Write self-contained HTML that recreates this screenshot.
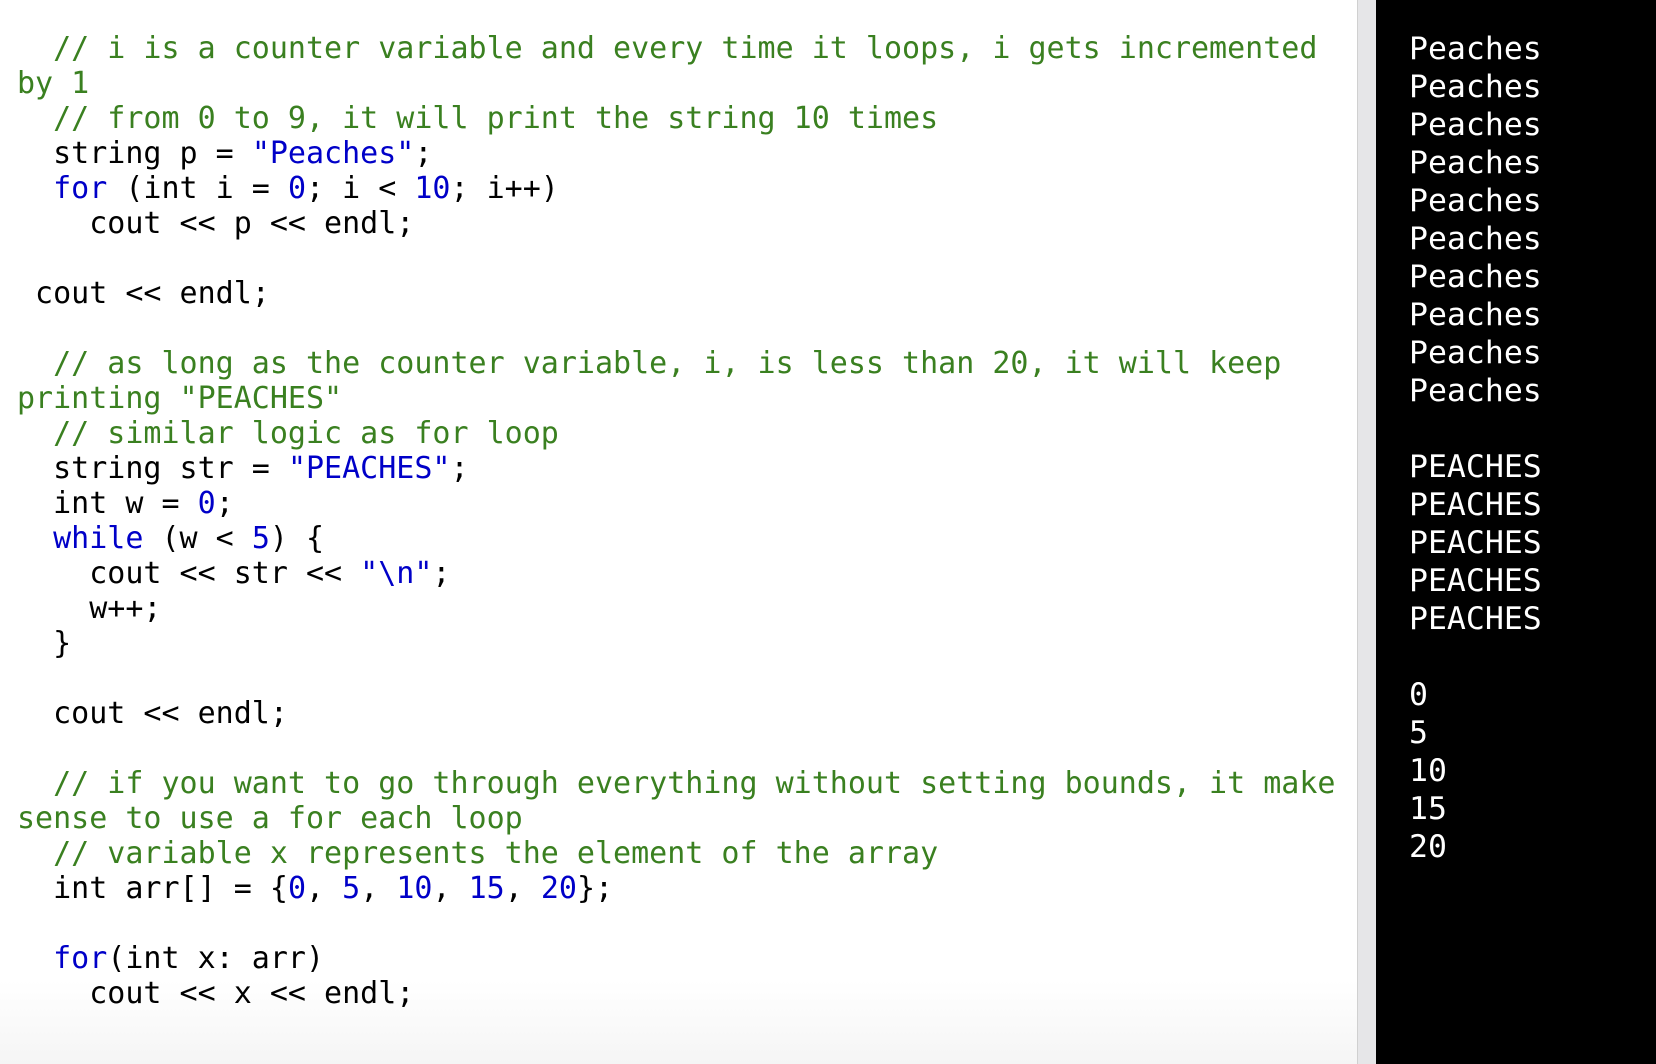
<!DOCTYPE html>
<html><head><meta charset="utf-8"><style>
html,body{margin:0;padding:0;width:1656px;height:1064px;overflow:hidden;background:#fff}
.left{position:absolute;left:0;top:0;width:1357px;height:1064px;background:linear-gradient(to bottom,#fff 0,#fff 980px,#f5f5f5 1064px)}
.sb{position:absolute;left:1357px;top:0;width:19px;height:1064px;background:#e6e6e8;border-left:1px solid #d0d0d0;box-sizing:border-box}
.right{position:absolute;left:1376px;top:0;width:280px;height:1064px;background:#000}
pre{position:absolute;left:17px;top:31px;margin:0;font-family:"DejaVu Sans Mono","Liberation Mono",monospace;font-size:30px;line-height:35px;color:#000}
.c{color:#3a8020}.k{color:#0000c8}
.out{position:absolute;left:1409px;top:30px;margin:0;font-family:"DejaVu Sans Mono",monospace;font-size:31.5px;line-height:38px;color:#fff;white-space:pre}
</style></head><body>
<div class="left"></div><div class="sb"></div><div class="right"></div>
<pre><span class="c">  // i is a counter variable and every time it loops, i gets incremented
by 1
  // from 0 to 9, it will print the string 10 times</span>
  string p = <span class="k">"Peaches"</span>;
  <span class="k">for</span> (int i = <span class="k">0</span>; i &lt; <span class="k">10</span>; i++)
    cout &lt;&lt; p &lt;&lt; endl;

 cout &lt;&lt; endl;

<span class="c">  // as long as the counter variable, i, is less than 20, it will keep
printing "PEACHES"
  // similar logic as for loop</span>
  string str = <span class="k">"PEACHES"</span>;
  int w = <span class="k">0</span>;
  <span class="k">while</span> (w &lt; <span class="k">5</span>) {
    cout &lt;&lt; str &lt;&lt; <span class="k">"\n"</span>;
    w++;
  }

  cout &lt;&lt; endl;

<span class="c">  // if you want to go through everything without setting bounds, it make
sense to use a for each loop
  // variable x represents the element of the array</span>
  int arr[] = {<span class="k">0</span>, <span class="k">5</span>, <span class="k">10</span>, <span class="k">15</span>, <span class="k">20</span>};

  <span class="k">for</span>(int x: arr)
    cout &lt;&lt; x &lt;&lt; endl;</pre>
<div class="out">Peaches
Peaches
Peaches
Peaches
Peaches
Peaches
Peaches
Peaches
Peaches
Peaches

PEACHES
PEACHES
PEACHES
PEACHES
PEACHES

0
5
10
15
20</div>
</body></html>
